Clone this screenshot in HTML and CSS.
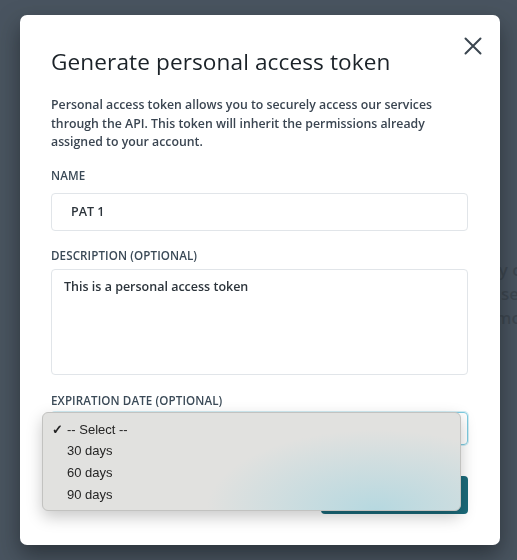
FILE: index.html
```html
<!DOCTYPE html>
<html>
<head>
<meta charset="utf-8">
<link rel="stylesheet" href="styles.css">
</head>
<body>
<div class="page">
  <p class="page-text"><span class="l1">securely co</span><span class="l2">otherwise</span><span class="l3">learn more</span></p>
</div>
<div class="backdrop"></div>
<div class="modal">
  <button class="close" aria-label="Close">
    <svg width="18" height="18" viewBox="0 0 18 18"><path d="M1.5 1.5 L16.5 16.5 M16.5 1.5 L1.5 16.5" stroke="#3b4650" stroke-width="2" stroke-linecap="round" fill="none"/></svg>
  </button>
  <h1 class="title">Generate personal access token</h1>
  <p class="intro">Personal access token allows you to securely access our services through the API. This token will inherit the permissions already assigned to your account.</p>
  <label class="label">NAME</label>
  <div class="input">PAT 1</div>
  <label class="label">DESCRIPTION (OPTIONAL)</label>
  <div class="textarea">This is a personal access token</div>
  <label class="label">EXPIRATION DATE (OPTIONAL)</label>
  <div class="select-wrap">
    <div class="select"></div>
    <ul class="menu">
      <li class="opt checked"><span class="check">✓</span>-- Select --</li>
      <li class="opt">30 days</li>
      <li class="opt">60 days</li>
      <li class="opt">90 days</li>
    </ul>
  </div>
  <div class="actions">
    <button class="primary">Generate</button>
  </div>
</div>
</body>
</html>
```

FILE: styles.css
```css
html, body {
  margin: 0;
  padding: 0;
  width: 517px;
  height: 560px;
  overflow: hidden;
  background: #4a5560;
  font-family: "Open Sans", "Inter", sans-serif;
}
.page {
  padding: 258px 0 0 0;
  width: 540px;
}
.page-text {
  margin: 0;
  display: flex;
  flex-direction: column;
  align-items: flex-end;
  font-family: "Open Sans", sans-serif;
  font-size: 17px;
  font-weight: 600;
  line-height: 24px;
  color: #1e2428;
  white-space: nowrap;
}
.l1 { margin-right: 9px; }
.l2 { margin-right: 21px; }
.l3 { margin-right: 1px; }
.backdrop {
  position: fixed;
  inset: 0;
  background: rgba(74, 85, 96, 0.72);
}
.modal {
  position: fixed;
  left: 20px;
  top: 15px;
  width: 480px;
  height: 530px;
  box-sizing: border-box;
  padding: 31px 32px 0 31px;
  background: #ffffff;
  border-radius: 7px;
  box-shadow: 0 10px 22px rgba(20, 25, 30, 0.55);
}
.close {
  position: absolute;
  top: 22px;
  right: 18px;
  border: 0;
  background: none;
  padding: 0;
  width: 18px;
  height: 18px;
}
.title {
  margin: 0;
  font-size: 22.6px;
  line-height: 32px;
  font-weight: 400;
  color: #1b2228;
  letter-spacing: 0.1px;
}
.intro {
  margin: 18px 0 0;
  font-size: 12.3px;
  line-height: 18.5px;
  font-weight: 600;
  color: #3a4551;
}
.label {
  display: block;
  margin-top: 16px;
  font-size: 11.6px;
  line-height: 16px;
  font-weight: 600;
  color: #3b4a57;
  letter-spacing: 0.1px;
}
.input {
  margin-top: 9px;
  height: 38px;
  box-sizing: border-box;
  border: 1px solid #e1e5e9;
  border-radius: 4px;
  padding: 0 19px;
  font-size: 12.5px;
  line-height: 36px;
  font-weight: 600;
  color: #2c343b;
}
.input + .label { margin-top: 17px; }
.textarea {
  margin-top: 5px;
  height: 106px;
  box-sizing: border-box;
  border: 1px solid #e1e5e9;
  border-radius: 4px;
  padding: 8px 12px;
  font-size: 12.5px;
  line-height: 18px;
  font-weight: 600;
  color: #2c343b;
}
.textarea + .label { margin-top: 18px; }
.select-wrap {
  position: relative;
  margin-top: 3px;
}
.select {
  height: 33px;
  box-sizing: border-box;
  border: 1px solid #7fcbe0;
  border-radius: 4px;
  box-shadow: 0 0 0 1px rgba(127, 203, 224, 0.35);
}
.menu {
  position: absolute;
  left: -9px;
  top: 0;
  width: 419px;
  height: 99px;
  box-sizing: border-box;
  margin: 0;
  padding: 6px 0 0;
  list-style: none;
  background:
    radial-gradient(ellipse 170px 80px at 80% 100%, rgba(180, 216, 224, 0.95), rgba(180, 216, 224, 0) 100%),
    #e1e1df;
  border: 1px solid #c2c2c0;
  border-radius: 6px;
  box-shadow: 0 6px 16px rgba(0, 0, 0, 0.22);
  z-index: 2;
  font-family: "Liberation Sans", Arial, sans-serif;
  font-size: 13px;
  color: #252525;
}
.opt {
  height: 21.8px;
  line-height: 21.8px;
  padding-left: 24px;
  position: relative;
}
.check {
  position: absolute;
  left: 9px;
  top: 0;
  font-size: 13px;
  font-weight: 700;
}
.actions {
  display: flex;
  justify-content: flex-end;
  margin-top: 31px;
}
.primary {
  width: 147px;
  height: 38px;
  border: 0;
  border-radius: 4px;
  background: #1b6a7a;
  color: #fff;
  font-family: inherit;
}
```
